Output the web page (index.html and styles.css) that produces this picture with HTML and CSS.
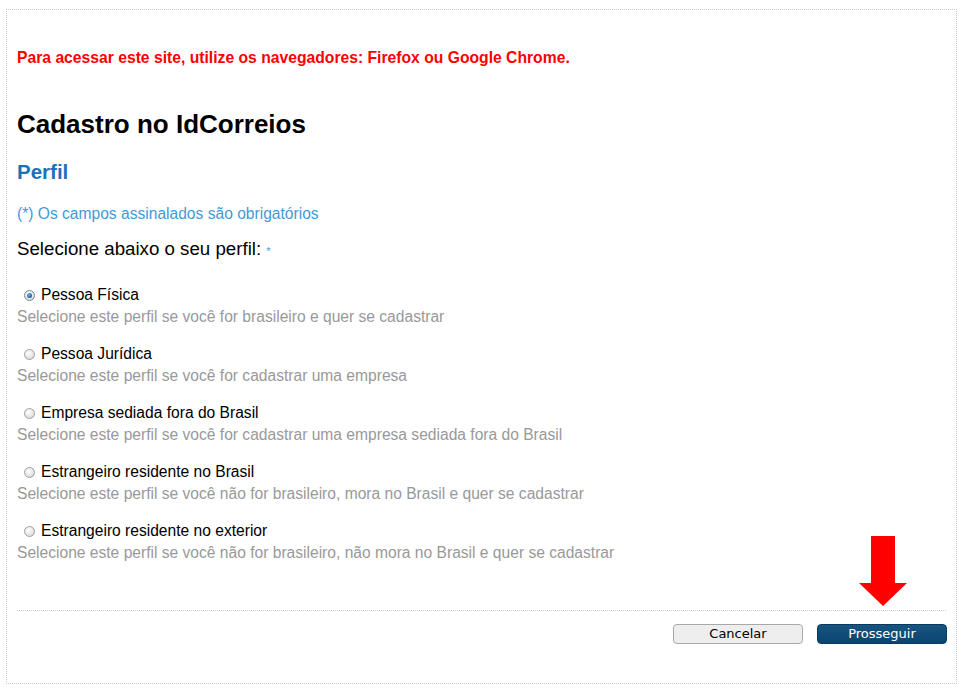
FILE: index.html
```html
<!DOCTYPE html>
<html lang="pt-BR">
<head>
  <meta charset="UTF-8" />
  <meta name="viewport" content="width=device-width, initial-scale=1.0"/>
  <title>Cadastro no IdCorreios</title>
  <link rel="stylesheet" href="styles.css">
</head>
<body>

  <div class="page">

    <p class="browser-warning">Para acessar este site, utilize os navegadores: Firefox ou Google Chrome.</p>

    <h1>Cadastro no IdCorreios</h1>

    <h2>Perfil</h2>

    <p class="required-note">(*) Os campos assinalados são obrigatórios</p>

    <p class="question">Selecione abaixo o seu perfil: <span class="star">*</span></p>

    <div class="profile-list">
      <div class="profile">
        <label><input type="radio" name="perfil" checked> Pessoa Física</label>
        <span class="hint">Selecione este perfil se você for brasileiro e quer se cadastrar</span>
      </div>
      <div class="profile">
        <label><input type="radio" name="perfil"> Pessoa Jurídica</label>
        <span class="hint">Selecione este perfil se você for cadastrar uma empresa</span>
      </div>
      <div class="profile">
        <label><input type="radio" name="perfil"> Empresa sediada fora do Brasil</label>
        <span class="hint">Selecione este perfil se você for cadastrar uma empresa sediada fora do Brasil</span>
      </div>
      <div class="profile">
        <label><input type="radio" name="perfil"> Estrangeiro residente no Brasil</label>
        <span class="hint">Selecione este perfil se você não for brasileiro, mora no Brasil e quer se cadastrar</span>
      </div>
      <div class="profile">
        <label><input type="radio" name="perfil"> Estrangeiro residente no exterior</label>
        <span class="hint">Selecione este perfil se você não for brasileiro, não mora no Brasil e quer se cadastrar</span>
      </div>
    </div>

    <div class="actions">
      <button class="btn btn-cancel">Cancelar</button>
      <button class="btn btn-next">Prosseguir</button>
    </div>

    <svg class="arrow" width="48" height="70" viewBox="0 0 48 70">
      <polygon points="12,0 36,0 36,47 48,47 24,70 0,47 12,47" fill="#ff0000"/>
    </svg>

  </div>

</body>
</html>
```

FILE: styles.css
```css
:root {
  --red: #ff0000;
  --blue: #1a73b8;
  --light-blue: #3f9ad8;
  --gray: #999999;
  --dots: #c8c8c8;
}

body {
  margin: 0;
  font-family: Arial, "Liberation Sans", sans-serif;
  background: #ffffff;
  color: #000000;
}

.page {
  position: relative;
  margin: 9px 5px 0 6px;
  height: 673px;
  border: 1px dotted var(--dots);
  padding: 0 10px 0 10px;
}

p {
  margin: 0;
}

.browser-warning {
  margin-top: 39px;
  font-size: 15.7px;
  line-height: 18px;
  font-weight: bold;
  color: var(--red);
}

h1 {
  margin: 42px 0 0;
  font-size: 26px;
  line-height: 30px;
  font-weight: bold;
}

h2 {
  margin: 21px 0 0;
  font-size: 20.5px;
  line-height: 24px;
  font-weight: bold;
  color: var(--blue);
}

.required-note {
  margin-top: 21px;
  font-size: 15.6px;
  line-height: 18px;
  color: var(--light-blue);
}

.question {
  margin-top: 15px;
  font-size: 18.7px;
  line-height: 22px;
}

.star {
  font-size: 11px;
  color: var(--light-blue);
  vertical-align: top;
  position: relative;
  top: 2px;
}

.profile-list {
  display: flex;
  flex-direction: column;
  gap: 19px;
  margin-top: 26px;
}

.profile {
  display: flex;
  flex-direction: column;
  gap: 4px;
  font-size: 15.6px;
  line-height: 18px;
}

.profile label {
  display: flex;
  align-items: center;
  gap: 6px;
  padding-left: 7px;
}

.profile input {
  appearance: none;
  -webkit-appearance: none;
  width: 11px;
  height: 11px;
  margin: 0;
  border-radius: 50%;
  border: 1px solid #a0a0a0;
  background: radial-gradient(circle at 40% 35%, #ffffff 0%, #e4e4e4 60%, #c8c8c8 100%);
  position: relative;
}

.profile input:checked {
  border-color: #7a8a99;
}

.profile input:checked::after {
  content: "";
  position: absolute;
  left: 2px;
  top: 2px;
  width: 5px;
  height: 5px;
  border-radius: 50%;
  background: radial-gradient(circle at 40% 35%, #7fb6e6 0%, #1a5c99 70%, #123f6b 100%);
}

.hint {
  color: var(--gray);
}

.actions {
  display: flex;
  justify-content: flex-end;
  gap: 14px;
  margin-top: 48px;
  border-top: 1px dotted var(--dots);
  padding-top: 13px;
}

.btn {
  width: 130px;
  height: 20px;
  padding: 0;
  border-radius: 4px;
  font-family: Tahoma, "DejaVu Sans", sans-serif;
  font-size: 13px;
  line-height: 18px;
  cursor: pointer;
}

.btn-cancel {
  background: #eeeeee;
  border: 1px solid #a8a8a8;
  color: #000000;
}

.btn-next {
  margin-right: -1px;
  background: linear-gradient(#17557f, #0b4470);
  border: 1px solid #0a3a60;
  color: #ffffff;
}

.arrow {
  position: absolute;
  left: 852px;
  top: 526px;
}
```
